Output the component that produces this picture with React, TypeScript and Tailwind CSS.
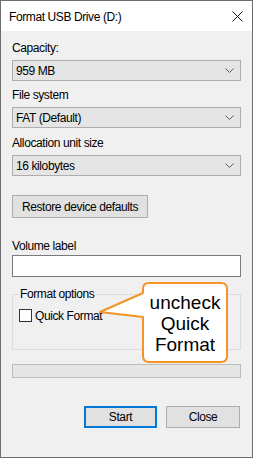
const font = { fontFamily: '"Liberation Sans", Arial, sans-serif' };

function Chevron() {
	return (
		<svg width="9" height="5" viewBox="0 0 9 5" className="shrink-0">
			<polyline points="0.5,0.5 4.5,4.5 8.5,0.5" fill="none" stroke="#5a5a5a" strokeWidth="1" />
		</svg>
	);
}

function Select({ value }: { value: string }) {
	return (
		<div className="mt-[4px] h-[21px] flex items-center justify-between border border-[#adadad] bg-[#e5e5e5] pl-[3px] pr-[6px]">
			<span>{value}</span>
			<Chevron />
		</div>
	);
}

function Label({ text, className }: { text: string; className: string }) {
	return <div className={`h-[15px] leading-[15px] ${className}`}>{text}</div>;
}

export default function App() {
	return (
		<div className="relative w-[253px] h-[458px] text-[12px] tracking-[-0.4px] text-black" style={font}>
			<div className="w-full h-full flex flex-col border border-[#6e6e6e] bg-[#f0f0f0]">
				{/* title bar */}
				<div className="h-[30px] bg-white flex items-center justify-between pl-[8px] pr-[9px]">
					<span className="pt-[1px]">Format USB Drive (D:)</span>
					<svg width="11" height="11" viewBox="0 0 11 11">
						<path d="M0.5 0.5 L10.5 10.5 M10.5 0.5 L0.5 10.5" stroke="#1a1a1a" strokeWidth="1" />
					</svg>
				</div>

				<div className="flex-1 flex flex-col px-[11px]">
					<Label text="Capacity:" className="mt-[10px]" />
					<Select value="959 MB" />
					<Label text="File system" className="mt-[7px]" />
					<Select value="FAT (Default)" />
					<Label text="Allocation unit size" className="mt-[8px]" />
					<Select value="16 kilobytes" />

					<button className="mt-[19px] w-[136px] h-[23px] border border-[#adadad] bg-[#e1e1e1] text-center">
						Restore device defaults
					</button>

					<Label text="Volume label" className="mt-[21px]" />
					<div className="mt-[1px] h-[22px] border border-[#7a7a7a] bg-white" />

					<fieldset className="mt-[10px] h-[63px] border border-[#dcdcdc] px-[6px]">
						<legend className="px-[2px] ml-[-1px] leading-[15px]">Format options</legend>
						<div className="mt-[6px] h-[15px] flex items-center gap-[3px]">
							<div className="w-[13px] h-[13px] border border-[#333] bg-white" />
							<span>Quick Format</span>
						</div>
					</fieldset>

					<div className="mt-[14px] h-[14px] border border-[#bcbcbc] bg-[#e6e6e6]" />

					<div className="mt-[28px] flex justify-end gap-[9px] pr-[1px]">
						<button className="w-[73px] h-[22px] border-2 border-[#0078d7] bg-[#e1e1e1]">Start</button>
						<button className="w-[74px] h-[22px] border border-[#adadad] bg-[#e1e1e1]">Close</button>
					</div>
				</div>
			</div>

			{/* callout */}
			<svg className="absolute inset-0 pointer-events-none" width="253" height="458" viewBox="0 0 253 458">
				<path
					d="M149,283 H221 Q227,283 227,289 V356 Q227,362 221,362 H149 Q143,362 143,356 V317 L100,312 L143,293 V289 Q143,283 149,283 Z"
					fill="white"
					stroke="#f39426"
					strokeWidth="2"
					strokeLinejoin="round"
				/>
			</svg>
			<div className="absolute left-[142px] top-[282px] w-[86px] h-[81px] flex items-center justify-center text-center text-[19px] leading-[21px] tracking-normal">
				<div className="pt-[1px]">
					uncheck
					<br />
					Quick
					<br />
					Format
				</div>
			</div>
		</div>
	);
}
